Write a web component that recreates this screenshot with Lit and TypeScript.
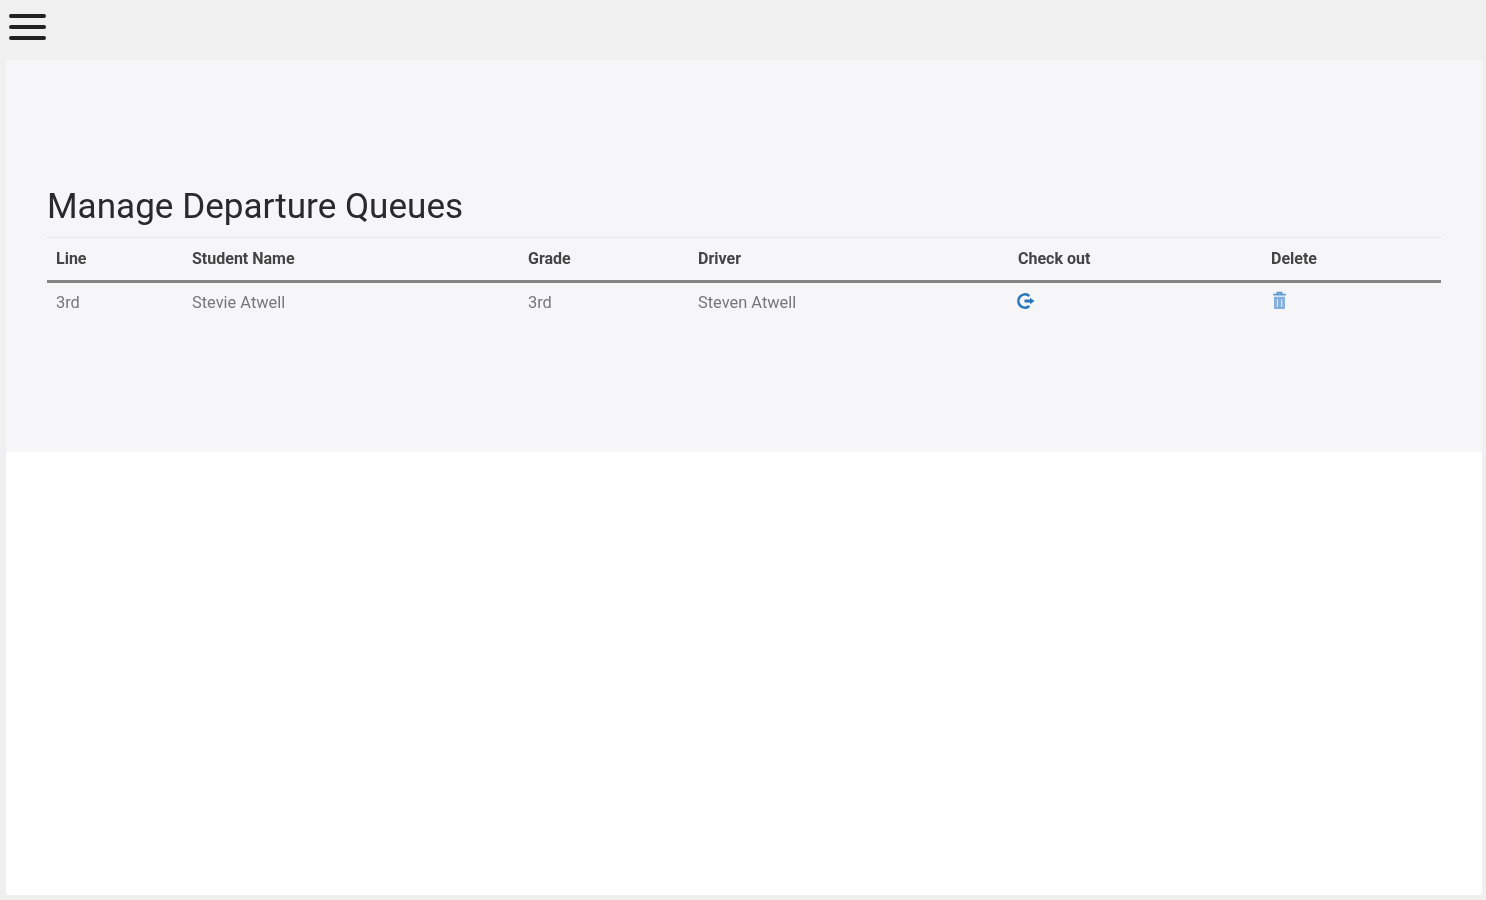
import { LitElement, html, css } from "lit";
import { customElement } from "lit/decorators.js";

@customElement("app-root")
export class AppRoot extends LitElement {
  static styles = css`
    :host { display: block; height: 900px; background: #f0f0f0; font-family: Roboto, "Liberation Sans", sans-serif; overflow: hidden; }
    .top { height: 60px; display: flex; align-items: center; padding-left: 9px; box-sizing: border-box; }
    .burger { display: flex; flex-direction: column; gap: 7px; margin-top: -6px; }
    .burger span { display: block; width: 37px; height: 4px; border-radius: 2px; background: #222; }
    .page { margin: 0 4px 0 6px; height: 835px; background: #fff; border-radius: 3px; overflow: hidden; }
    .panel { height: 392px; background: #f6f6f8; padding: 124px 41px 0; box-sizing: border-box; }
    h1 { margin: 0; font-size: 35.1px; line-height: 44px; height: 53px; font-weight: 400; color: #2a2a2a; }
    table { width: 1394px; table-layout: fixed; border-collapse: collapse; font-size: 16px; }
    th, td { padding: 0 0 2px 9px; text-align: left; box-sizing: content-box; }
    th { height: 40px; font-weight: 700; color: #444; border-top: 1px solid #e6e6e8; border-bottom: 3px solid #858585; }
    td { height: 38px; font-size: 16.4px; color: #777; }
    .c1 { width: 136px; } .c2 { width: 336px; } .c3 { width: 170px; } .c4 { width: 320px; } .c5 { width: 253px; }
    svg { display: block; }
    .out { width: 18px; height: 18px; margin-left: -1px; margin-top: -2px; }
    .trash { width: 17px; height: 19px; margin-top: -3px; }
    h1, table, .burger { filter: blur(0.7px); }
  `;

  render() {
    return html`
      <div class="top"><div class="burger"><span></span><span></span><span></span></div></div>
      <div class="page">
        <div class="panel">
          <h1>Manage Departure Queues</h1>
          <table>
            <colgroup><col class="c1" /><col class="c2" /><col class="c3" /><col class="c4" /><col class="c5" /><col /></colgroup>
            <thead><tr><th>Line</th><th>Student Name</th><th>Grade</th><th>Driver</th><th>Check out</th><th>Delete</th></tr></thead>
            <tbody>
              <tr>
                <td>3rd</td><td>Stevie Atwell</td><td>3rd</td><td>Steven Atwell</td>
                <td>
                  <svg class="out" viewBox="0 0 18 18" fill="none">
                    <path d="M11.5 3.4A6.6 6.6 0 1 0 11.5 14.6" stroke="#2a76bd" stroke-width="2.6" stroke-linecap="round"/>
                    <path d="M7.5 7.6h5.5V5.8L17.5 9 13 12.2v-1.8H7.5z" fill="#2a76bd"/>
                  </svg>
                </td>
                <td>
                  <svg class="trash" viewBox="0 0 16 18" fill="none">
                    <path d="M2 3.5h12M6 3V1.5h4V3" stroke="#5f97d0" stroke-width="1.6"/>
                    <path d="M2.8 5.5h10.4V16a1 1 0 0 1-1 1H3.8a1 1 0 0 1-1-1z" fill="#84b0de"/>
                    <path d="M6 8v7M10 8v7" stroke="#d8e6f4" stroke-width="1.2"/>
                  </svg>
                </td>
              </tr>
            </tbody>
          </table>
        </div>
      </div>
    `;
  }
}
